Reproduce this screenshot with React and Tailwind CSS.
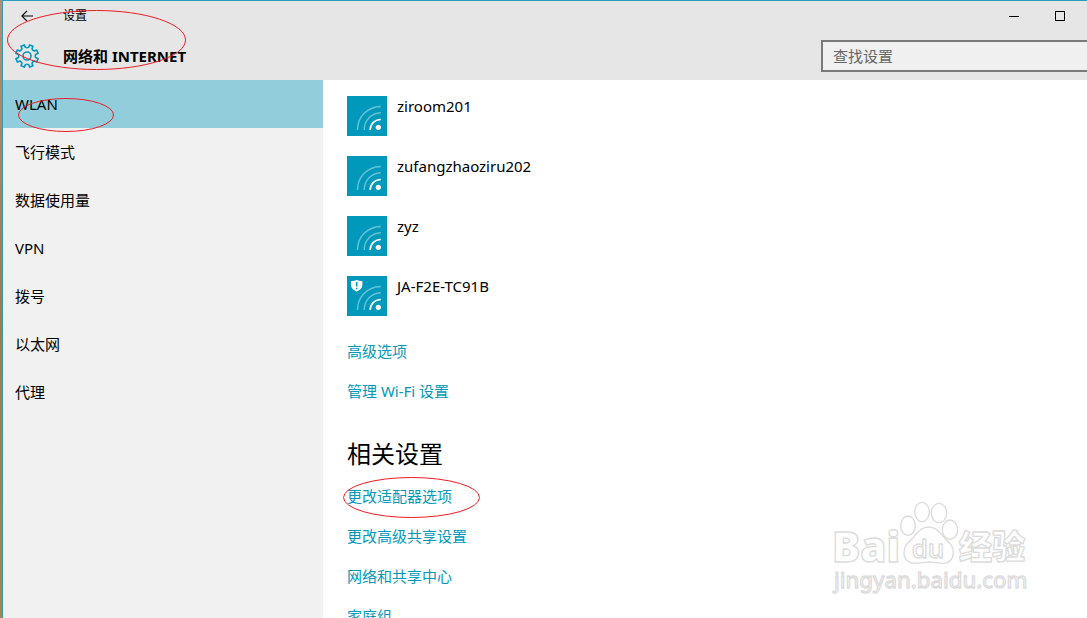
import React, { useState } from "react";

const tabs = [
  { id: "wlan", name: "WLAN" },
  { id: "airplane", name: "飞行模式" },
  { id: "data-usage", name: "数据使用量" },
  { id: "vpn", name: "VPN" },
  { id: "dial-up", name: "拨号" },
  { id: "ethernet", name: "以太网" },
  { id: "proxy", name: "代理" },
];

const networks = [
  { ssid: "ziroom201", open: false },
  { ssid: "zufangzhaoziru202", open: false },
  { ssid: "zyz", open: false },
  { ssid: "JA-F2E-TC91B", open: true },
];

const wifiLinks = ["高级选项", "管理 Wi-Fi 设置"];
const relatedLinks = ["更改适配器选项", "更改高级共享设置", "网络和共享中心", "家庭组"];

// eight teeth, with a notch pointing straight up
function gearPath() {
  const point = (radius, deg) => {
    const rad = (deg * Math.PI) / 180;
    return `${(12 + radius * Math.cos(rad)).toFixed(2)} ${(12 + radius * Math.sin(rad)).toFixed(2)}`;
  };
  const parts = [];
  for (let i = 0; i < 8; i++) {
    const a = 22.5 + i * 45;
    parts.push(
      `${i === 0 ? "M" : "L"}${point(8.8, a - 12)} L${point(11.4, a - 9)} L${point(11.4, a + 9)} L${point(8.8, a + 12)} Q${point(7.9, a + 22.5)} ${point(8.8, a + 33)}`
    );
  }
  return parts.join(" ") + "Z";
}

function GearIcon() {
  return (
    <svg className="h-6 w-6 shrink-0" viewBox="0 0 24 24" fill="none" stroke="#0099bc" strokeWidth="1.6" strokeLinejoin="round" aria-hidden="true">
      <path d={gearPath()} />
      <circle cx="12" cy="12" r="4" />
    </svg>
  );
}

function WifiTile({ open }) {
  return (
    <svg className="h-10 w-10 shrink-0" viewBox="0 0 40 40" fill="none" aria-hidden="true">
      <rect width="40" height="40" fill="#0099bc" />
      <path d="M10.5 34C10.5 21 20 11 33.8 10.5" stroke="#66c2d7" strokeWidth="1.4" />
      <path d="M17.2 34C17.2 24.5 24 17.2 33.8 16.8" stroke="#66c2d7" strokeWidth="1.4" />
      <path d="M23.2 34C23.2 28 27.5 23.8 33.8 23.5" stroke="#fff" strokeWidth="1.6" />
      <circle cx="31.3" cy="31.3" r="2.6" fill="#fff" />
      {open && (
        <>
          <path d="M4 5.2C6.5 5.2 8 4.8 9.7 3.8C11.4 4.8 13 5.2 15.4 5.2V8.5C15.4 12 13 14.2 9.7 15.5C6.4 14.2 4 12 4 8.5Z" fill="#fff" />
          <path d="M9.7 6V10.5M9.7 11.8V13.3" stroke="#0099bc" strokeWidth="1.5" />
        </>
      )}
    </svg>
  );
}

function Watermark() {
  return (
    <svg className="pointer-events-none absolute bottom-[18px] right-[47px] h-[110px] w-[220px]" viewBox="0 0 660 330" fill="#fff" stroke="#dcdcdc" strokeWidth="4" strokeLinejoin="round">
      <text x="36" y="216" fontSize="126" fontWeight="800" fontFamily="Open Sans, sans-serif">Bai</text>
      <ellipse cx="264" cy="107" rx="22" ry="29" />
      <ellipse cx="306" cy="66" rx="22" ry="29" />
      <ellipse cx="357" cy="69" rx="23" ry="29" />
      <ellipse cx="390" cy="119" rx="23" ry="29" />
      <path d="M326 111C304 111 294 126 280 142C264 158 252 166 252 188C252 208 266 220 286 220C302 220 312 216 326 216C342 216 352 220 368 220C388 220 400 206 400 188C400 166 386 156 372 142C358 126 348 111 326 111Z" />
      <text x="275" y="204" fontSize="78" fontWeight="600" fontFamily="Open Sans, sans-serif">du</text>
      <text x="416" y="208" fontSize="100" fontWeight="900" fontFamily="Noto Sans CJK SC, sans-serif">经验</text>
      <text x="42" y="294" fontSize="67" fontWeight="400" fontFamily="Noto Sans, sans-serif">jingyan.baidu.com</text>
    </svg>
  );
}

// red pen circles drawn over the window
function PenMarks() {
  return (
    <svg className="pointer-events-none absolute left-0 top-0 h-[618px] w-[500px]" viewBox="0 0 500 618" fill="none" stroke="#ed1c24" strokeWidth="1" aria-hidden="true">
      <ellipse cx="96.5" cy="40" rx="89" ry="29.5" />
      <ellipse cx="66" cy="115" rx="47.5" ry="16.5" />
      <ellipse cx="411.5" cy="497.5" rx="68" ry="20" />
    </svg>
  );
}

function SettingsLink({ children }) {
  return (
    <a href="#" className="block w-fit text-[#0099bc] hover:text-gray-500">
      {children}
    </a>
  );
}

export default function App() {
  const [activeTab, setActiveTab] = useState("wlan");
  const [query, setQuery] = useState("");

  return (
    <div className="relative flex h-screen overflow-hidden bg-white font-['Noto_Sans','Noto_Sans_CJK_SC',sans-serif] text-[15px] leading-5 text-black">
      <div className="w-[2px] shrink-0 bg-linear-to-b from-[#b98a78] via-[#a07a4c] to-[#a8854f]"></div>

      <div className="flex min-w-0 flex-1 flex-col border-l border-t border-[#2a9fbc]">
        <header className="shrink-0 bg-[#e6e6e6]">
          {/* Title bar */}
          <div className="flex h-[30px] items-center pr-1">
            <button type="button" aria-label="返回" className="flex h-full w-12 items-center justify-center">
              <svg className="h-3 w-3" viewBox="0 0 12 12" fill="none" stroke="#000" strokeWidth="1.2">
                <path d="M12 6H0.8M6 0.8L0.8 6L6 11.2" />
              </svg>
            </button>
            <span className="pl-3 text-xs">设置</span>
            <div className="ml-auto flex h-full">
              <button type="button" aria-label="最小化" className="flex w-[46px] items-center justify-center">
                <span className="h-px w-2.5 bg-black"></span>
              </button>
              <button type="button" aria-label="最大化" className="flex w-[46px] items-center justify-center">
                <span className="h-2.5 w-2.5 border border-black"></span>
              </button>
            </div>
          </div>

          <div className="flex h-[49px] items-center pl-3">
            <GearIcon />
            <h1 className="pl-6 font-bold">网络和 INTERNET</h1>
            <input
              type="text"
              aria-label="查找设置"
              placeholder="查找设置"
              value={query}
              onChange={(e) => setQuery(e.target.value)}
              className="ml-auto h-8 w-[266px] border-2 border-r-0 border-[#7a7a7a] bg-[#f0f0f0] px-2.5 outline-none placeholder:text-[#666666]"
            />
          </div>
        </header>

        <div className="flex min-h-0 flex-1">
          <nav className="w-80 shrink-0 bg-[#f1f1f1]">
            {tabs.map((tab) => (
              <button
                key={tab.id}
                type="button"
                onClick={() => setActiveTab(tab.id)}
                className={`flex h-12 w-full items-center px-3 text-left ${
                  activeTab === tab.id ? "bg-[#91cddb]" : "hover:bg-gray-200"
                }`}
              >
                {tab.name}
              </button>
            ))}
          </nav>

          <main className="min-w-0 flex-1 overflow-hidden px-6 pt-4">
            <ul className="flex flex-col gap-5">
              {networks.map((network) => (
                <li key={network.ssid} className="flex gap-2.5">
                  <WifiTile open={network.open} />
                  <span>{network.ssid}</span>
                </li>
              ))}
            </ul>

            <div className="mt-[25px] flex flex-col gap-5">
              {wifiLinks.map((link) => (
                <SettingsLink key={link}>{link}</SettingsLink>
              ))}
            </div>

            <h2 className="mt-[37px] text-2xl">相关设置</h2>
            <div className="mt-4 flex flex-col gap-5">
              {relatedLinks.map((link) => (
                <SettingsLink key={link}>{link}</SettingsLink>
              ))}
            </div>
          </main>
        </div>
      </div>

      <Watermark />
      <PenMarks />
    </div>
  );
}
